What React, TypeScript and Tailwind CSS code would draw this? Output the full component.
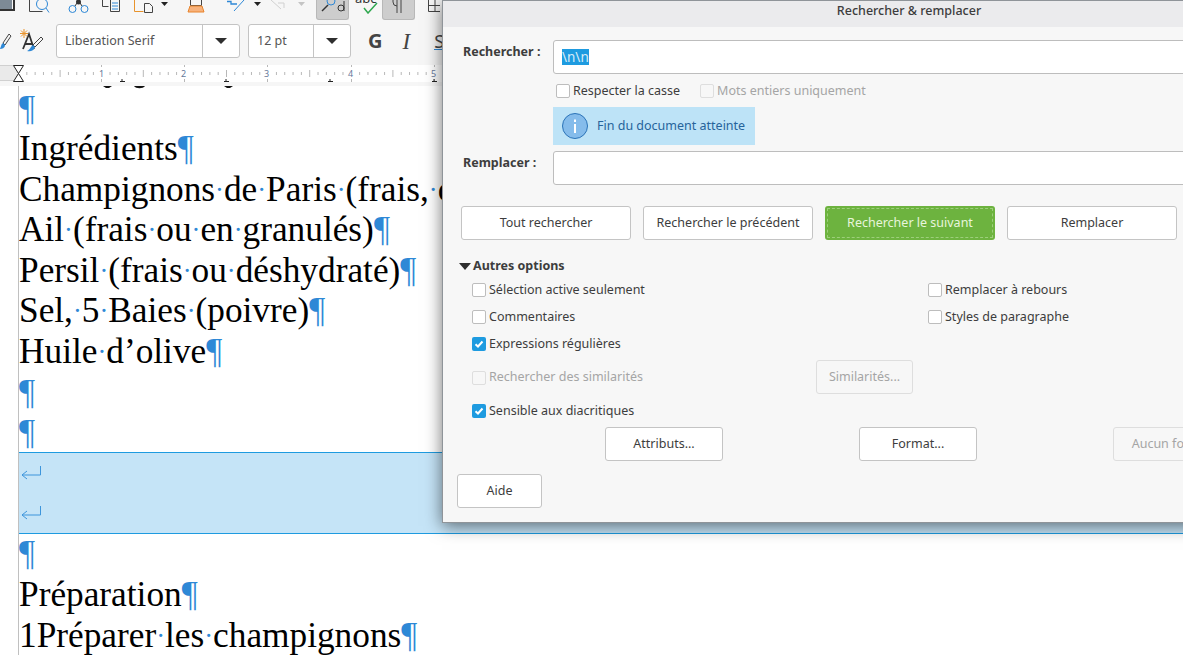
const UI = "font-['Noto_Sans','Open_Sans',sans-serif]";

function Dot() {
  return <span className="text-[0.75em] align-[2px] leading-none text-[#2e88d6]">·</span>;
}

// spaces show up as blue dots, formatting marks are on
function Line({ text, open }: { text: string; open?: boolean }) {
  const parts = text.split(' ');
  return (
    <div className="w-[423px] h-[40.6px] leading-[40.6px] whitespace-nowrap overflow-hidden">
      {parts.map((p, i) => (
        <span key={i}>
          {p}
          {i < parts.length - 1 && <Dot />}
        </span>
      ))}
      {!open && <span className="text-[#2e88d6]">¶</span>}
    </div>
  );
}

function BreakMark() {
  return (
    <div className="h-[40px] flex items-center pl-[2px]">
      <svg width="20" height="14" viewBox="0 0 20 14" fill="none" stroke="#3d95dc" strokeWidth="1">
        <path d="M19.5 0v9H1M6 5 1 9l5 4" />
      </svg>
    </div>
  );
}

function Check({ on, off }: { on?: boolean; off?: boolean }) {
  if (on) {
    return (
      <span className="w-[14px] h-[14px] rounded-[2px] bg-[#1e9be0] flex items-center justify-center shrink-0">
        <svg width="10" height="10" viewBox="0 0 10 10" fill="none" stroke="#fff" strokeWidth="2">
          <path d="M1.5 5.2 4 7.5 8.5 2.5" />
        </svg>
      </span>
    );
  }
  return <span className={`w-[14px] h-[14px] rounded-[2px] border shrink-0 ${off ? 'border-[#dedede] bg-[#f7f7f7]' : 'border-[#bdbdbd] bg-white'}`} />;
}

function Opt({ label, on, off }: { label: string; on?: boolean; off?: boolean }) {
  return (
    <div className={`flex items-center gap-[3px] text-[12.5px] ${off ? 'text-[#a5a5a5]' : 'text-[#3d3d3d]'}`}>
      <Check on={on} off={off} />
      <span>{label}</span>
    </div>
  );
}

function Btn({ label, className, off }: { label: string; className: string; off?: boolean }) {
  return (
    <div className={`h-[34px] shrink-0 flex items-center justify-center rounded-[3px] border pt-[1px] text-[12.5px] whitespace-nowrap overflow-hidden ${off ? 'border-[#dedede] bg-[#f7f7f7] text-[#a5a5a5]' : 'border-[#c4c4c4] bg-white text-[#3d3d3d]'} ${className}`}>
      {label}
    </div>
  );
}

function Dialog() {
  return (
    <div className={`absolute left-[442px] top-0 w-[760px] h-[523px] border border-[#8f9499] bg-[#f7f7f7] shadow-[0_3px_16px_rgba(0,0,0,0.55)] ${UI}`}>
      <div className="h-[26px] bg-[#ebebed] flex justify-center pl-[174px] pt-[1px] text-[12.5px] font-medium text-[#3d3d3d]">
        Rechercher & remplacer
      </div>
      <div className="pl-[20px] pt-[13px]">
        <div className="flex">
          <div className="w-[90px] shrink-0 font-bold text-[12.5px] text-[#3d3d3d] pt-[3px]">Rechercher :</div>
          <div className="w-[660px] shrink-0 h-[34px] border border-[#bdbdbd] rounded-[3px] bg-white flex items-center pl-[8px] text-[13.5px] text-[#d8ecf8]">
            <span className="bg-[#1e9be0] leading-[16px]">\n\n</span>
          </div>
        </div>
        <div className="ml-[93px] mt-[8px] flex gap-[20px]">
          <Opt label="Respecter la casse" />
          <Opt label="Mots entiers uniquement" off />
        </div>
        <div className="ml-[90px] mt-[6px] w-[202px] h-[38px] bg-[#bde3f7] flex items-center pl-[9px] gap-[9px] text-[12.5px] text-[#26649b]">
          <svg width="26" height="26" viewBox="0 0 26 26">
            <circle cx="13" cy="13" r="12.5" fill="#85bceb" stroke="#2b73b8" />
            <rect x="12" y="11" width="2" height="9" fill="#fff" />
            <rect x="12" y="6.5" width="2" height="2.5" fill="#fff" />
          </svg>
          <span className="pt-[2px]">Fin du document atteinte</span>
        </div>
        <div className="flex mt-[6px]">
          <div className="w-[90px] shrink-0 font-bold text-[12.5px] text-[#3d3d3d] pt-[3px]">Remplacer :</div>
          <div className="w-[660px] shrink-0 h-[34px] border border-[#bdbdbd] rounded-[3px] bg-white" />
        </div>
        <div className="flex gap-[12px] mt-[21px] -ml-[2px]">
          <Btn label="Tout rechercher" className="w-[170px]" />
          <Btn label="Rechercher le précédent" className="w-[170px]" />
          <div className="w-[170px] shrink-0 h-[34px] p-[2px] rounded-[3px] bg-[#6db33f] text-[12.5px] text-[#e8f5dc]">
            <div className="h-full flex items-center justify-center pt-[1px] border border-dashed border-[#9ccf7b]">Rechercher le suivant</div>
          </div>
          <Btn label="Remplacer" className="w-[170px]" />
        </div>
        <div className="flex items-center mt-[17px] -ml-[4px] gap-[2px] font-bold text-[12.5px] text-[#3d3d3d]">
          <svg width="12" height="7" viewBox="0 0 12 7"><path d="M0 0h12L6 7z" fill="#2e2e2e" /></svg>
          Autres options
        </div>
        <div className="ml-[9px] mt-[5px] grid grid-cols-[456px_1fr] gap-y-[9px] leading-[18px]">
          <Opt label="Sélection active seulement" />
          <Opt label="Remplacer à rebours" />
          <Opt label="Commentaires" />
          <Opt label="Styles de paragraphe" />
          <Opt label="Expressions régulières" on />
          <div />
        </div>
        <div className="ml-[9px] mt-[7px] flex items-center">
          <div className="w-[344px] pt-[2px]"><Opt label="Rechercher des similarités" off /></div>
          <Btn label="Similarités..." className="w-[97px]" off />
        </div>
        <div className="ml-[9px] mt-[8px]"><Opt label="Sensible aux diacritiques" on /></div>
        <div className="flex gap-[136px] ml-[142px] mt-[7px]">
          <Btn label="Attributs..." className="w-[118px]" />
          <Btn label="Format..." className="w-[118px]" />
          <Btn label="Aucun format" className="w-[118px]" off />
        </div>
        <div className="-ml-[6px] mt-[13px]">
          <Btn label="Aide" className="w-[85px]" />
        </div>
      </div>
    </div>
  );
}

function Ruler() {
  const ticks = Array.from({ length: 51 }, (_, i) => i).filter((i) => i % 10 !== 0);
  const tabs = [122, 226, 330, 434];
  return (
    <div className="relative h-[21px] overflow-hidden">
      <div className="absolute left-0 top-0 w-[18px] h-[16px] bg-[#eaeaea] border-y border-[#d0d0d0]" />
      <div className="absolute left-[18px] top-0 right-0 h-[17px] bg-white" />
      <svg className="absolute left-0 top-0" width="440" height="17">
        {ticks.map((i) => (
          <rect key={i} x={18 + i * 8.32} y={i % 5 === 0 ? 5 : 7} width="1" height={i % 5 === 0 ? 7 : 3} fill="#b8b8b8" />
        ))}
        {[101, 184, 267, 351, 434].map((x) => (
          <g key={x} fill="#b8b8b8">
            <rect x={x} y="0" width="1" height="2" />
            <rect x={x} y="14" width="1" height="3" />
          </g>
        ))}
        {tabs.map((x) => (
          <path key={x} d={`M${x} 14v3M${x - 2} 16.500h5`} stroke="#222" fill="none" />
        ))}
      </svg>
      {[1, 2, 3, 4, 5].map((n, i) => (
        <span key={n} className={`absolute top-[2px] text-[9px] text-[#66789a] ${UI} ${['left-[99px]', 'left-[181px]', 'left-[264px]', 'left-[348px]', 'left-[431px]'][i]}`}>{n}</span>
      ))}
      <svg className="absolute left-[13px] top-0" width="11" height="17" viewBox="0 0 11 17" fill="#fff" stroke="#222">
        <path d="M.5.500h10L5.500 8.500zM.5 16.500h10L5.500 8.500z" />
      </svg>
    </div>
  );
}

function Toolbars() {
  return (
    <div className={`h-[86px] bg-[#f6f6f6] overflow-hidden ${UI}`}>
      <div className="h-[24px] relative">
        <svg width="440" height="24" viewBox="0 0 440 24" fill="none" strokeWidth="1">
          <path d="M0 0h12v9H0z" fill="#7d8a96" />
          <path d="M0 10h14V0" stroke="#333" strokeWidth="2" />
          <path d="M29.500 0v11.500h13" stroke="#444" />
          <circle cx="42" cy="4" r="5.500" stroke="#2e88d6" />
          <path d="m46 8 3 4.500" stroke="#2e88d6" />
          <circle cx="72.500" cy="9" r="3.500" stroke="#2e88d6" />
          <circle cx="84.500" cy="9" r="3.500" stroke="#2e88d6" />
          <circle cx="78.500" cy="2" r="2.500" fill="#333" />
          <path d="M75 6l2-3M80 3l2 3" stroke="#333" />
          <path d="M102.500 0v6.500h6" stroke="#444" />
          <path d="M110.500 0v11.500h9V0" stroke="#444" />
          <path d="M112 3h6M112 6h6M112 9h6" stroke="#2e88d6" />
          <path d="M134.500 0v11.500h9" stroke="#e8932c" />
          <path d="M144.500 3.500h5l3 3v6h-8z" stroke="#444" />
          <path d="M161 2h7l-3.500 4z" fill="#222" />
          <path d="M190.500 0v5.500h11V0" stroke="#444" />
          <path d="M190 6h12l2 6h-16z" fill="#f7b27c" stroke="#e8842c" />
          <path d="M227 1.500h4v2.500h6" stroke="#2e88d6" strokeWidth="1.300" />
          <path d="M244 0l-10 11" stroke="#2e88d6" />
          <path d="M254 2h7l-3.500 4z" fill="#222" />
          <path d="M271 0l10 9M278 3h6v5" stroke="#d0d0d0" />
          <path d="M298 2h7l-3.500 4z" fill="#c4c4c4" />
          <path d="M428.500 0v11.500h13M428.500 5.500h13M435 0v11" stroke="#444" />
        </svg>
        <div className="absolute left-[316px] top-0 w-[33px] h-[20px] bg-[#cdcdcd] border border-[#b8b8b8] border-t-0 rounded-b-[3px]">
          <svg width="31" height="18" viewBox="0 0 31 18" fill="none" stroke="#333">
            <circle cx="14" cy="1" r="4" stroke="#2e88d6" />
            <path d="m5 11 6-6" strokeWidth="1.500" />
            <circle cx="24" cy="8" r="3" />
            <path d="M27 1v10" />
          </svg>
        </div>
        <div className="absolute left-[355px] top-0 w-[27px] h-[20px] overflow-hidden">
          <span className="absolute -top-[11px] left-0 text-[13px] text-[#333]">abc</span>
          <svg className="absolute left-[8px] top-[2px]" width="16" height="12" viewBox="0 0 16 12" fill="none" stroke="#2fa84f" strokeWidth="1.500"><path d="M1 6l4 5L14 1" /></svg>
        </div>
        <div className="absolute left-[382px] top-0 w-[33px] h-[20px] bg-[#cdcdcd] border border-[#b8b8b8] border-t-0 rounded-b-[3px]">
          <svg width="31" height="18" viewBox="0 0 31 18" fill="none" stroke="#444"><path d="M18 0v13M14 0v13M14 6a4 4 0 0 1-4-4V0" /></svg>
        </div>
      </div>
      <div className="h-[41px] flex items-start relative">
        <svg className="absolute left-0 top-[4px]" width="46" height="24" viewBox="0 0 46 24" fill="none">
          <path d="M9 6 3 15l2 2 6-9z" stroke="#444" />
          <path d="M0 21c2 0 5-1 5-4l-2-2c-2 1-2 4-3 6z" fill="#2e88d6" />
          <path d="M23 21 29 6l5 15M25.500 16h7" stroke="#333" strokeWidth="1.800" />
          <path d="M41 9 33 17l2 2 8-8z" stroke="#444" />
          <path d="M27 23c3 1 7 0 8-4l-2-2c-2 1-3 5-6 6z" fill="#2e88d6" />
          <path d="M24 1v9M20 5.500h8M21 2.500l6 6M27 2.500l-6 6" stroke="#e8932c" />
        </svg>
        <div className="ml-[56px] w-[184px] h-[34px] border border-[#c4c4c4] rounded-[3px] bg-white flex text-[12.5px] text-[#555]">
          <span className="w-[146px] flex items-center pl-[8px] border-r border-[#c4c4c4]">Liberation Serif</span>
          <span className="flex-1 flex items-center justify-center"><svg width="12" height="6"><path d="M0 0h12L6 6z" fill="#2e2e2e" /></svg></span>
        </div>
        <div className="ml-[8px] w-[103px] h-[34px] border border-[#c4c4c4] rounded-[3px] bg-white flex text-[12.5px] text-[#555]">
          <span className="w-[65px] flex items-center pl-[8px] border-r border-[#c4c4c4]">12 pt</span>
          <span className="flex-1 flex items-center justify-center"><svg width="12" height="6"><path d="M0 0h12L6 6z" fill="#2e2e2e" /></svg></span>
        </div>
        <span className="ml-[17px] mt-[2px] font-bold text-[20px] text-[#444]">G</span>
        <span className="ml-[20px] mt-[1px] font-['Liberation_Serif',serif] italic text-[23px] text-[#444]">I</span>
        <span className="ml-[24px] mt-[9px] text-[18.500px] text-[#444] border-b border-[#2e88d6] leading-[16px]">S</span>
      </div>
      <Ruler />
    </div>
  );
}

export default function App() {
  return (
    <div className="relative w-[1183px] h-[655px] overflow-hidden bg-white">
      <Toolbars />
      <div className="font-['Liberation_Serif',serif] text-[35.3px] text-black">
        <div className="relative ml-[18px] h-[569px] border-l border-[#c0c0c0] pt-[2.5px] overflow-hidden">
          {/* bottoms of the line scrolled away above */}
          <svg className="absolute left-[84px] top-0" width="130" height="4" fill="#111">
            <path d="M0 0h9L6 2H3zM31 0h11c-2 3-9 3-11 0zM121 0h9l-3 2h-3z" />
          </svg>
          <Line text="" />
          <Line text="Ingrédients" />
          <Line text="Champignons de Paris (frais, c" open />
          <Line text="Ail (frais ou en granulés)" />
          <Line text="Persil (frais ou déshydraté)" />
          <Line text="Sel, 5 Baies (poivre)" />
          <Line text="Huile d’olive" />
          <Line text="" />
          <Line text="" />
          <div className="-ml-[1px] -mt-[1.5px] h-[82px] bg-[#c5e4f7] border border-r-0 border-[#1e9be0]">
            <BreakMark />
            <BreakMark />
          </div>
          <Line text="" />
          <Line text="Préparation" />
          <Line text="1Préparer les champignons" />
        </div>
      </div>
      <Dialog />
    </div>
  );
}
